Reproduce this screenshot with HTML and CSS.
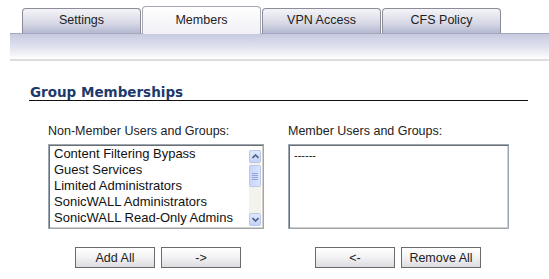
FILE: index.html
```html
<!DOCTYPE html>
<html lang="en">
<head>
    <meta charset="UTF-8">
    <title>Group Settings</title>
    <link rel="stylesheet" href="styles.css">
</head>
<body>
    <div class="tabs">
        <div class="tab">Settings</div>
        <div class="tab active">Members</div>
        <div class="tab">VPN Access</div>
        <div class="tab">CFS Policy</div>
    </div>
    <div class="tab-bar"></div>

    <div class="section">
        <h2 class="section-title">Group Memberships</h2>
        <div class="columns">
            <div class="column">
                <div class="label">Non-Member Users and Groups:</div>
                <div class="listbox left-list">
                    <div class="items">
                        <div>Content Filtering Bypass</div>
                        <div>Guest Services</div>
                        <div>Limited Administrators</div>
                        <div>SonicWALL Administrators</div>
                        <div>SonicWALL Read-Only Admins</div>
                    </div>
                    <div class="scrollbar">
                        <div class="sb-btn">
                            <svg width="7" height="5" viewBox="0 0 7 5"><path d="M0.5 4 L3.5 1 L6.5 4" fill="none" stroke="#4d6185" stroke-width="1.6"/></svg>
                        </div>
                        <div class="sb-thumb">
                            <span></span><span></span><span></span><span></span>
                        </div>
                        <div class="sb-track"></div>
                        <div class="sb-btn">
                            <svg width="7" height="5" viewBox="0 0 7 5"><path d="M0.5 1 L3.5 4 L6.5 1" fill="none" stroke="#4d6185" stroke-width="1.6"/></svg>
                        </div>
                    </div>
                </div>
                <div class="buttons">
                    <button>Add All</button>
                    <button>-&gt;</button>
                </div>
            </div>
            <div class="column">
                <div class="label">Member Users and Groups:</div>
                <div class="listbox right-list">
                    <div class="items">
                        <div>------</div>
                    </div>
                </div>
                <div class="buttons">
                    <button>&lt;-</button>
                    <button>Remove All</button>
                </div>
            </div>
        </div>
    </div>
</body>
</html>
```

FILE: styles.css
```css
body {
    margin: 0;
    background: #fff;
    font-family: "Liberation Sans", Arial, sans-serif;
    font-size: 12.5px;
    color: #1a1a1a;
}
.tabs {
    display: flex;
    align-items: flex-end;
    gap: 1px;
    padding: 6px 0 0 22px;
    height: 33px;
    box-sizing: border-box;
}
.tab {
    width: 117px;
    height: 24px;
    line-height: 22px;
    text-align: center;
    border: 1px solid #8c8c98;
    border-bottom: none;
    border-radius: 4px 4px 0 0;
    background: linear-gradient(#f4f4f8, #d6d8e6 60%, #b4b8d0);
    color: #222;
}
.tab.active {
    height: 27px;
    line-height: 26px;
    background: linear-gradient(#ffffff, #f0f0f6);
    border-color: #a8a8b4;
    position: relative;
    top: 1px;
}
.tab-bar {
    margin: 0 0 0 10px;
    height: 25px;
    border-top: 1px solid #a4a8bc;
    border-bottom: 2px solid #dcdcdc;
    background: linear-gradient(#c6cae0, #e4e6f0 60%, #fff);
}
.section {
    padding: 23px 0 0 29px;
}
.section-title {
    width: 498px;
    margin: 0;
    padding: 0 0 0 1px;
    font-family: "DejaVu Sans", Verdana, sans-serif;
    font-size: 13.5px;
    font-weight: bold;
    line-height: 16px;
    color: #1d3a6c;
    border-bottom: 1px solid #111;
}
.columns {
    display: flex;
    padding: 23px 0 0 19px;
}
.column {
    width: 240px;
}
.label {
    height: 20px;
    line-height: 14px;
    color: #222;
}
.listbox {
    display: flex;
    box-sizing: border-box;
    height: 85px;
    border: 1px solid #9aa6b2;
    box-shadow: inset 1px 1px 0 #6e6e6e, inset -1px -1px 0 #d4d0c8;
    background: #fff;
}
.left-list {
    width: 216px;
}
.right-list {
    width: 221px;
}
.items {
    flex: 1;
    padding: 1px 0 0 5px;
    line-height: 16px;
    font-size: 13px;
    color: #111;
}
.right-list .items {
    padding-top: 3px;
    font-size: 11px;
    line-height: 14px;
}
.scrollbar {
    width: 12px;
    margin: 5px 2px 2px 0;
    display: flex;
    flex-direction: column;
    background: #f3f2ec;
}
.sb-btn {
    height: 11px;
    display: flex;
    align-items: center;
    justify-content: center;
    border: 1px solid #b8c8ec;
    border-radius: 2px;
    background: linear-gradient(#dfe8fc, #c4d4f6);
}
.sb-thumb {
    height: 20px;
    margin-top: 2px;
    display: flex;
    flex-direction: column;
    align-items: center;
    justify-content: center;
    gap: 1px;
    border: 1px solid #b8c8ec;
    border-radius: 2px;
    background: linear-gradient(90deg, #c8d6f8, #dbe4fc);
}
.sb-thumb span {
    width: 6px;
    height: 1px;
    background: #8ea4d8;
}
.sb-track {
    flex: 1;
}
.buttons {
    display: flex;
    gap: 6px;
    padding: 18px 0 0 27px;
}
.buttons button {
    width: 80px;
    height: 21px;
    padding: 0;
    font-family: "Liberation Sans", Arial, sans-serif;
    font-size: 12.5px;
    color: #222;
    border: 1px solid #6a6a6a;
    border-radius: 0;
    background: linear-gradient(#ffffff, #f2f2f4 50%, #dcdce0);
}
```
